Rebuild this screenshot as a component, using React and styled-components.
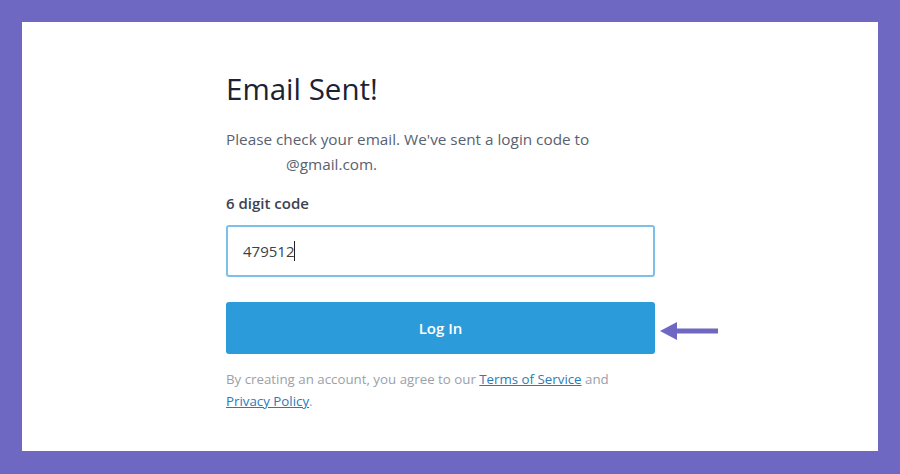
import React from "react";
import styled, { createGlobalStyle } from "styled-components";

const Global = createGlobalStyle`
  html, body {
    margin: 0;
    padding: 0;
  }
  body {
    font-family: "Open Sans", "Noto Sans", sans-serif;
    background: #6f68c3;
  }
`;

// purple frame round the white sheet
const Frame = styled.div`
  box-sizing: border-box;
  width: 900px;
  height: 474px;
  padding: 22px 22px 23px 22px;
  background: #6f68c3;
`;

const Sheet = styled.div`
  height: 100%;
  background: #ffffff;
  padding: 48px 0 0 204px;
  box-sizing: border-box;
`;

const Column = styled.div`
  width: 429px;
  display: flex;
  flex-direction: column;
`;

const Titulo = styled.h1`
  margin: 0;
  font-size: 29.5px;
  line-height: 38px;
  font-weight: 500;
  color: #1b2234;
`;

const Mensagem = styled.p`
  margin: 19px 0 0 0;
  font-size: 15.3px;
  line-height: 25px;
  color: #596170;
`;

const Email = styled.span`
  white-space: nowrap;
`;

const Oculto = styled.span`
  display: inline-block;
  width: 60px;
`;

const Rotulo = styled.label`
  margin-top: 15px;
  font-size: 15px;
  line-height: 22px;
  font-weight: 600;
  color: #3c4350;
`;

const Campo = styled.div`
  margin-top: 11px;
  height: 52px;
  box-sizing: border-box;
  border: 2px solid #7cc0ea;
  border-radius: 3px;
  padding: 0 15px;
  display: flex;
  align-items: center;
  font-size: 15px;
  color: #3a3f48;
`;

const Cursor = styled.span`
  display: inline-block;
  width: 1px;
  height: 20px;
  background: #222;
`;

const LinhaBotao = styled.div`
  position: relative;
  margin-top: 25px;
`;

const Botao = styled.button`
  width: 100%;
  height: 52px;
  border: none;
  border-radius: 3px;
  background: #2b9bda;
  color: #ffffff;
  font-family: inherit;
  font-size: 15px;
  font-weight: 600;
  cursor: pointer;
`;

const Seta = styled.svg`
  position: absolute;
  left: 434px;
  top: 20px;
`;

const Rodape = styled.p`
  margin: 14px 0 0 0;
  font-size: 13.3px;
  line-height: 22px;
  color: #9ba1a9;

  a {
    color: #2a7ab8;
    text-decoration: underline;
  }
`;

export default function App() {
  return (
    <Frame>
      <Global />
      <Sheet>
        <Column>
          <Titulo>Email Sent!</Titulo>
          <Mensagem>
            Please check your email. We've sent a login code to{" "}
            <Email>
              <Oculto />@gmail.com.
            </Email>
          </Mensagem>
          <Rotulo>6 digit code</Rotulo>
          <Campo>
            479512
            <Cursor />
          </Campo>
          <LinhaBotao>
            <Botao>Log In</Botao>
            <Seta width="58" height="18" viewBox="0 0 58 18">
              <polygon points="0,9 17,0 17,18" fill="#6f68c3" />
              <rect x="14" y="6.5" width="44" height="5" fill="#6f68c3" />
            </Seta>
          </LinhaBotao>
          <Rodape>
            By creating an account, you agree to our <a href="#">Terms of Service</a> and{" "}
            <a href="#">Privacy Policy</a>.
          </Rodape>
        </Column>
      </Sheet>
    </Frame>
  );
}
